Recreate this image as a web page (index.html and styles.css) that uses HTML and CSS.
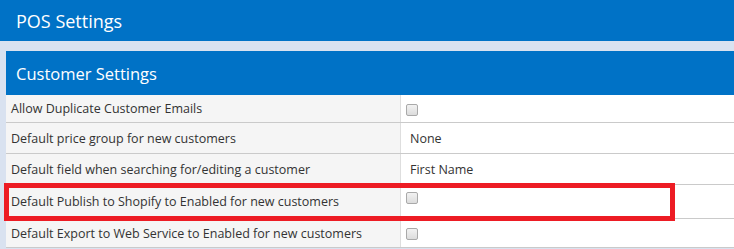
FILE: index.html
```html
<!DOCTYPE html>
<html>
<head>
<meta charset="utf-8">
<link rel="stylesheet" href="styles.css">
</head>
<body>
<header class="topbar"><h1>POS Settings</h1></header>
<section class="panel">
  <div class="panel-head"><h2>Customer Settings</h2></div>
  <div class="rows">
    <div class="row r1"><div class="label">Allow Duplicate Customer Emails</div><div class="value"><input type="checkbox" class="cb"></div></div>
    <div class="row r2"><div class="label">Default price group for new customers</div><div class="value">None</div></div>
    <div class="row r3"><div class="label">Default field when searching for/editing a customer</div><div class="value">First Name</div></div>
    <div class="row r4"><div class="label">Default Publish to Shopify to Enabled for new customers</div><div class="value top"><input type="checkbox" class="cb"></div></div>
    <div class="row r5"><div class="label">Default Export to Web Service to Enabled for new customers</div><div class="value"><input type="checkbox" class="cb"></div></div>
  </div>
  <div class="highlight"></div>
</section>
</body>
</html>
```
FILE: styles.css
```css
* { box-sizing: border-box; }
html, body { margin: 0; padding: 0; }
body {
  background: #d9e2f0;
  font-family: "Open Sans", "Noto Sans", sans-serif;
  color: #333;
  overflow: hidden;
}
.topbar {
  height: 41px;
  background: #0072c6;
  display: flex;
  align-items: center;
  padding-left: 16px;
}
.topbar h1, .panel-head h2 {
  margin: 0;
  font-weight: 400;
  font-size: 18px;
  color: #fff;
}
.panel-head h2 { font-size: 16.5px; }
.panel {
  position: relative;
  margin: 10px 0 0 6px;
}
.panel-head {
  height: 44px;
  background: #0072c6;
  display: flex;
  align-items: center;
  padding-left: 10px;
  padding-top: 1px;
}
.row {
  display: grid;
  grid-template-columns: 395px 1fr;
  border-bottom: 1px solid #cacaca;
  font-size: 12.5px;
}
.r1 { height: 28px; }
.r2, .r3 { height: 31px; }
.r4 { height: 34px; }
.r5 { height: 29px; }
.label {
  background: #f5f5f5;
  border-right: 1px solid #dedede;
  display: flex;
  align-items: center;
  padding-left: 5px;
}
.value {
  background: #fff;
  display: flex;
  align-items: center;
  padding-left: 9px;
}
.value.top { align-items: flex-start; padding-top: 7px; }
.cb {
  appearance: none;
  -webkit-appearance: none;
  width: 12px;
  height: 12px;
  margin: 2px 0 0 -4px;
  border: 1px solid #a9a9a9;
  border-radius: 2px;
  background: linear-gradient(#f2f2f2, #dcdcdc);
}
.value.top .cb { margin-top: 0; }
.highlight {
  position: absolute;
  left: -2px;
  top: 132px;
  width: 671px;
  height: 38px;
  border: 5px solid #ed1c24;
  pointer-events: none;
}
```
